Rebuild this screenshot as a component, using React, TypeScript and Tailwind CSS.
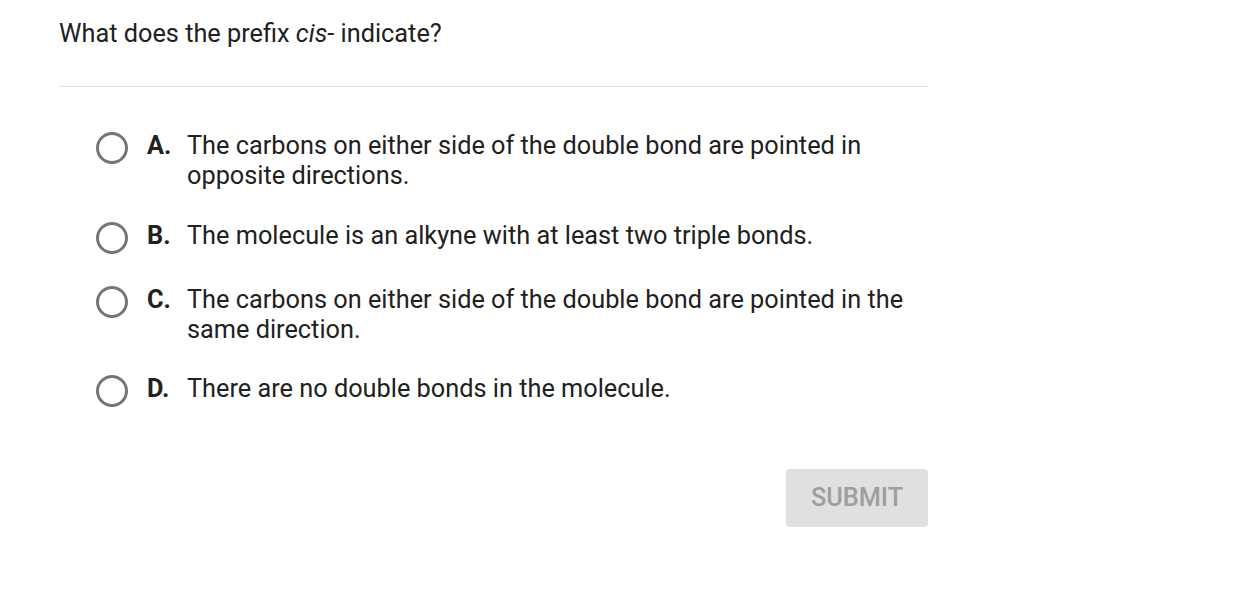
const options = [
  { letter: 'A.', text: 'The carbons on either side of the double bond are pointed in opposite directions.', gap: 'mt-0' },
  { letter: 'B.', text: 'The molecule is an alkyne with at least two triple bonds.', gap: 'mt-[30px]' },
  { letter: 'C.', text: 'The carbons on either side of the double bond are pointed in the same direction.', gap: 'mt-[31px]' },
  { letter: 'D.', text: 'There are no double bonds in the molecule.', gap: 'mt-[29px]' },
]

const Option = ({ letter, text, gap }: { letter: string; text: string; gap: string }) => {
  return (
    <label className={`flex items-start ${gap}`}>
      <span className="mt-[1px] mr-[19px] h-[32px] w-[32px] shrink-0 rounded-full border-[3px] border-[#757575]" />
      <span className="w-[40px] shrink-0 font-bold">{letter}</span>
      <span className="w-[740px]">{text}</span>
    </label>
  )
}

export default function App() {
  return (
    <div className="min-h-[612px] bg-white pl-[59px] pt-[17px] text-[25.3px] leading-[30px] text-[#212121]" style={{ fontFamily: 'Roboto, "Liberation Sans", sans-serif' }}>
      <div className="w-[869px]">
        <p className="leading-[34px]">
          What does the prefix <i>cis</i>- indicate?
        </p>
        <hr className="mt-[35px] border-t border-[#e0e0e0]" />
        <div className="mt-[44px] flex flex-col pl-[37px]">
          {options.map((o) => (
            <Option key={o.letter} letter={o.letter} text={o.text} gap={o.gap} />
          ))}
        </div>
        <div className="mt-[62px] flex justify-end">
          <button className="h-[58px] w-[142px] rounded-[4px] bg-[#e0e0e0] font-medium text-[#9e9e9e]">SUBMIT</button>
        </div>
      </div>
    </div>
  )
}
